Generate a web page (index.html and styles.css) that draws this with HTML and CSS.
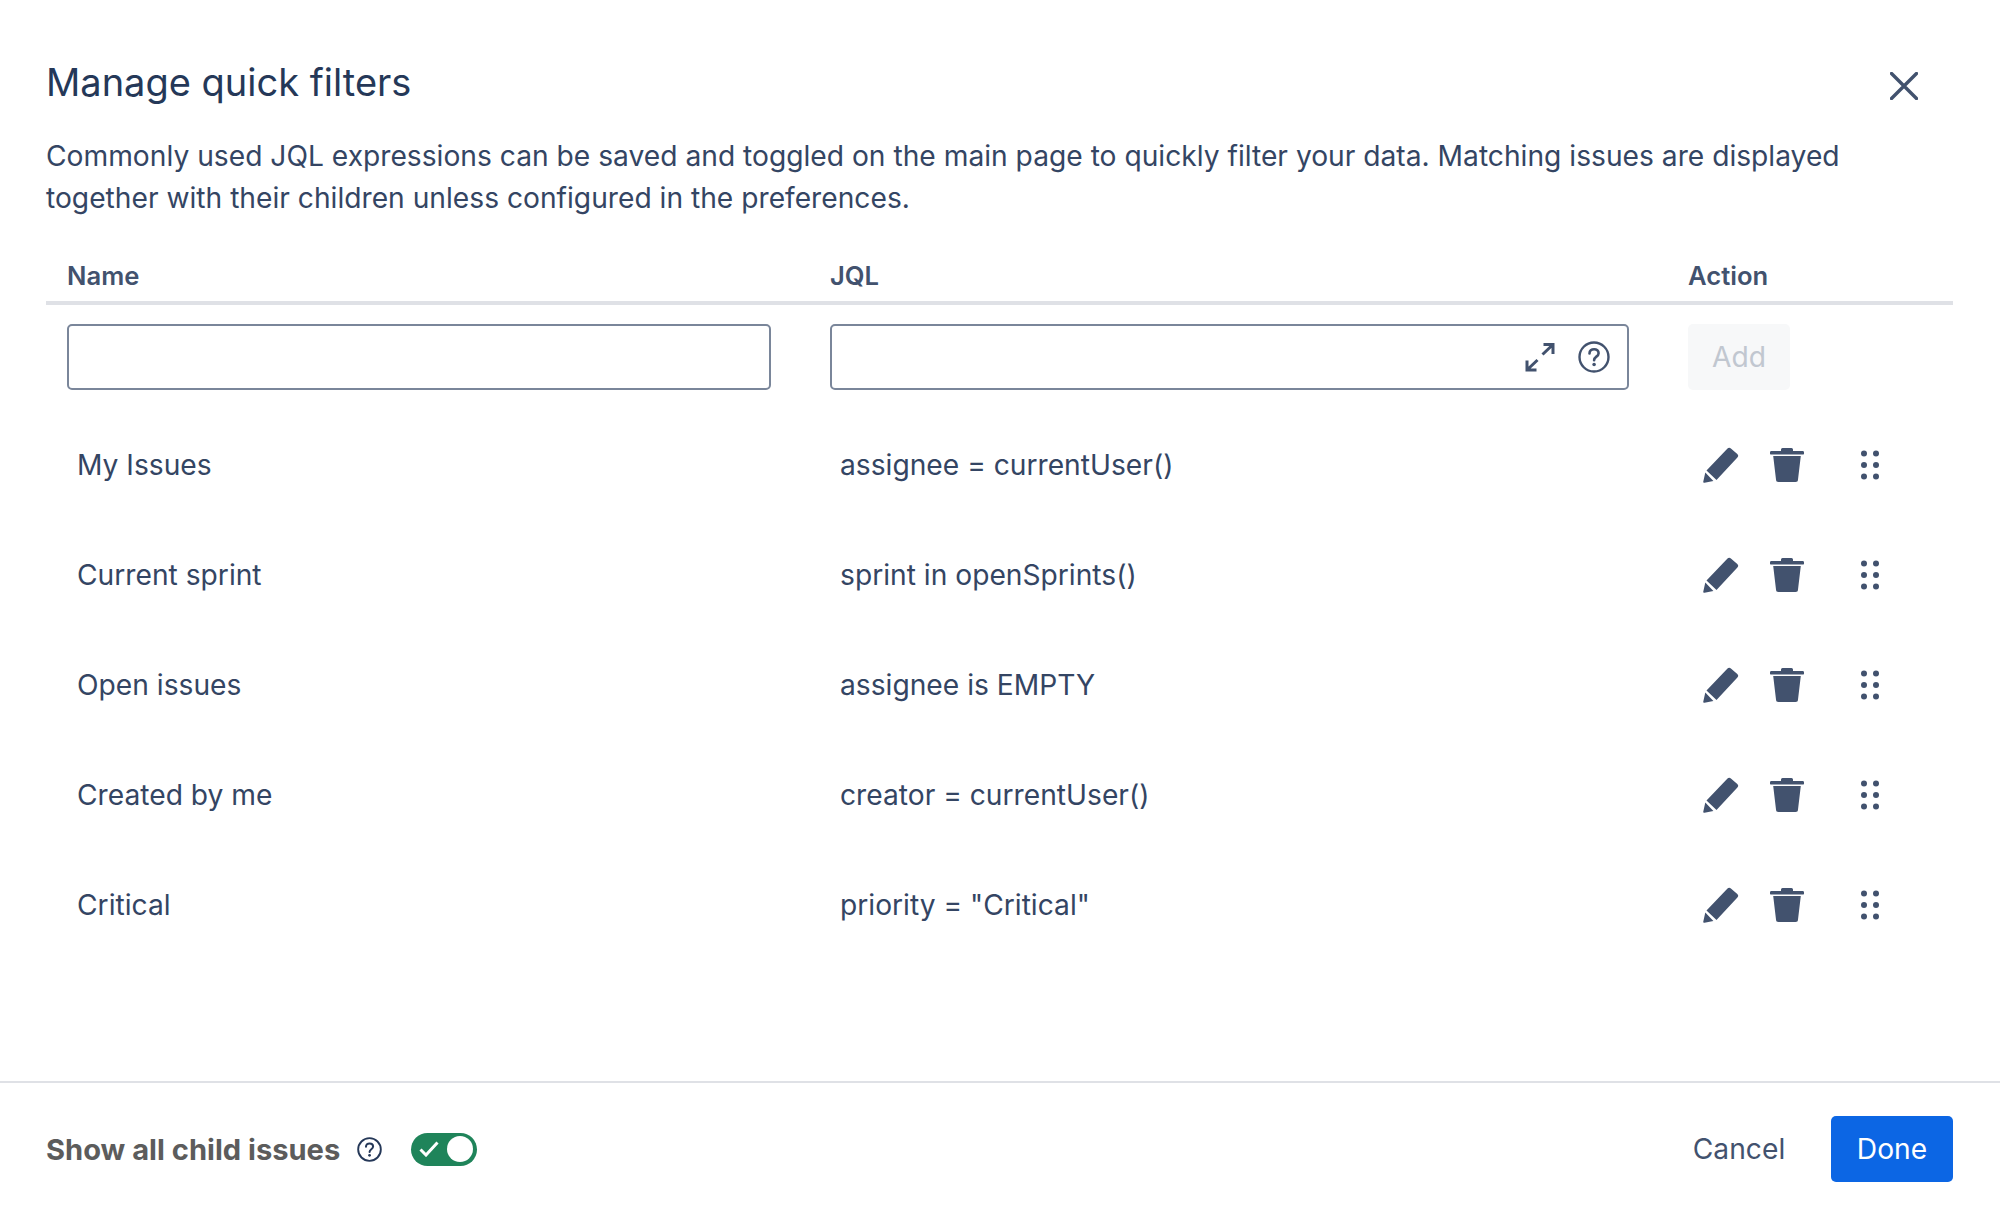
FILE: index.html
```html
<!DOCTYPE html>
<html lang="en">
<head>
    <meta charset="UTF-8">
    <title>Manage quick filters</title>
    <link rel="stylesheet" href="styles.css">
</head>
<body>
    <svg class="defs" width="0" height="0">
        <symbol id="i-pencil" viewBox="0 0 36 36">
            <path d="M24.500 1.500a2.500 2.500 0 0 1 3.400 0l6.400 5.500a2.500 2.500 0 0 1 .1 3.500L13.500 33 3.500 23.500z"/>
            <path d="M2.300 25.500l8.100 8.500L1.500 35.800a1 1 0 0 1-1.200-1.200z"/>
        </symbol>
        <symbol id="i-trash" viewBox="0 0 34 34">
            <path d="M12.500 0h9a1.500 1.500 0 0 1 1.500 1.500V3h9.500a1.500 1.500 0 0 1 0 3.600h-31a1.500 1.500 0 0 1 0-3.600H11V1.500A1.500 1.500 0 0 1 12.500 0z"/>
            <path d="M3.200 8h27.600l-2.800 23.500a2.500 2.500 0 0 1-2.500 2.500H8.500A2.500 2.500 0 0 1 6 31.500z"/>
        </symbol>
        <symbol id="i-grip" viewBox="0 0 18 30">
            <circle cx="3" cy="3.500" r="3"/><circle cx="15" cy="3.500" r="3"/>
            <circle cx="3" cy="15" r="3"/><circle cx="15" cy="15" r="3"/>
            <circle cx="3" cy="26.500" r="3"/><circle cx="15" cy="26.500" r="3"/>
        </symbol>
        <symbol id="i-help" viewBox="0 0 32 32">
            <circle cx="16" cy="16" r="14.500" fill="none" stroke="currentColor" stroke-width="2.400"/>
            <path d="M11.500 12.500c0-2.700 2-4.300 4.600-4.300s4.500 1.600 4.500 4c0 3.400-4.500 3.500-4.500 7" fill="none" stroke="currentColor" stroke-width="2.600" stroke-linecap="round"/>
            <circle cx="16.100" cy="23.500" r="1.800" fill="currentColor"/>
        </symbol>
    </svg>

    <div class="modal">
        <header class="modal-head">
            <h1>Manage quick filters</h1>
            <button class="close" aria-label="Close">
                <svg width="28" height="28" viewBox="0 0 28 28"><path d="M1.500 1.500l25 25M26.500 1.500l-25 25" fill="none" stroke="currentColor" stroke-width="3.400" stroke-linecap="round"/></svg>
            </button>
        </header>

        <p class="intro">Commonly used JQL expressions can be saved and toggled on the main page to quickly filter your data. Matching issues are displayed together with their children unless configured in the preferences.</p>

        <div class="table">
            <div class="row head-row">
                <div>Name</div>
                <div>JQL</div>
                <div>Action</div>
            </div>

            <div class="row form-row">
                <div><input class="field" type="text"></div>
                <div class="jql-field">
                    <input type="text">
                    <svg class="expand" width="30" height="30" viewBox="0 0 30 30"><path d="M18.500 2.500h9.500V12M28 2.500L17.500 12.500M2 18.500V28h9.500M2 28l10.500-10" fill="none" stroke="currentColor" stroke-width="3"/></svg>
                    <svg class="help" width="32" height="32"><use href="#i-help"/></svg>
                </div>
                <div><button class="add" disabled>Add</button></div>
            </div>

            <div class="row item-row">
                <div>My Issues</div>
                <div>assignee = currentUser()</div>
                <div class="actions">
                    <svg class="pencil"><use href="#i-pencil"/></svg>
                    <svg class="trash"><use href="#i-trash"/></svg>
                    <svg class="grip"><use href="#i-grip"/></svg>
                </div>
            </div>
            <div class="row item-row">
                <div>Current sprint</div>
                <div>sprint in openSprints()</div>
                <div class="actions">
                    <svg class="pencil"><use href="#i-pencil"/></svg>
                    <svg class="trash"><use href="#i-trash"/></svg>
                    <svg class="grip"><use href="#i-grip"/></svg>
                </div>
            </div>
            <div class="row item-row">
                <div>Open issues</div>
                <div>assignee is EMPTY</div>
                <div class="actions">
                    <svg class="pencil"><use href="#i-pencil"/></svg>
                    <svg class="trash"><use href="#i-trash"/></svg>
                    <svg class="grip"><use href="#i-grip"/></svg>
                </div>
            </div>
            <div class="row item-row">
                <div>Created by me</div>
                <div>creator = currentUser()</div>
                <div class="actions">
                    <svg class="pencil"><use href="#i-pencil"/></svg>
                    <svg class="trash"><use href="#i-trash"/></svg>
                    <svg class="grip"><use href="#i-grip"/></svg>
                </div>
            </div>
            <div class="row item-row">
                <div>Critical</div>
                <div>priority = "Critical"</div>
                <div class="actions">
                    <svg class="pencil"><use href="#i-pencil"/></svg>
                    <svg class="trash"><use href="#i-trash"/></svg>
                    <svg class="grip"><use href="#i-grip"/></svg>
                </div>
            </div>
        </div>

        <footer class="modal-foot">
            <div class="foot-left">
                <span class="child-label">Show all child issues</span>
                <svg class="foot-help" width="25" height="25"><use href="#i-help"/></svg>
                <span class="toggle">
                    <svg width="20" height="16" viewBox="0 0 20 16"><path d="M1.500 8.500l5.500 5.500L18.500 1.500" fill="none" stroke="#fff" stroke-width="3"/></svg>
                    <span class="thumb"></span>
                </span>
            </div>
            <div class="foot-right">
                <button class="cancel">Cancel</button>
                <button class="done">Done</button>
            </div>
        </footer>
    </div>
</body>
</html>
```

FILE: styles.css
```css
* {
    box-sizing: border-box;
}

body {
    margin: 0;
    background: #fff;
    font-family: Inter, "Liberation Sans", sans-serif;
    font-size: 28.2px;
    color: #344563;
}

.defs {
    position: absolute;
}

button {
    font-family: inherit;
    font-size: 28.2px;
    border: 0;
    padding: 0;
    background: none;
}

.modal {
    height: 1227px;
    display: flex;
    flex-direction: column;
}

.modal-head {
    display: flex;
    justify-content: space-between;
    padding: 60px 82px 0 46px;
    height: 135px;
}

h1 {
    margin: 0;
    font-size: 38px;
    font-weight: 400;
    line-height: 44px;
    color: #253858;
}

.close {
    height: 28px;
    margin-top: 12px;
    color: #42526e;
}

.intro {
    margin: 0;
    padding: 0 150px 0 46px;
    line-height: 42px;
}

.table {
    margin: 39px 47px 0 46px;
    flex: 1;
}

.row {
    display: grid;
    grid-template-columns: 763px 858px 286px;
}

.row > div {
    padding-left: 21px;
}

.head-row {
    height: 47px;
    border-bottom: 4px solid #dfe1e6;
    font-size: 25.6px;
    font-weight: 600;
    line-height: 36px;
    color: #42526e;
}

.form-row {
    height: 105px;
    padding-top: 19px;
}

.field,
.jql-field {
    height: 66px;
    border: 2px solid #7a869a;
    border-radius: 5px;
    background: #fff;
}

.field {
    width: 704px;
    display: block;
}

.form-row .jql-field {
    display: flex;
    align-items: center;
    width: 799px;
    margin-left: 21px;
    padding: 0 17px 0 0;
    color: #42526e;
}

.jql-field input {
    flex: 1;
    border: 0;
    outline: 0;
    min-width: 0;
}

.expand {
    margin-right: 23px;
}

.add {
    width: 102px;
    height: 66px;
    border-radius: 5px;
    background: #f7f8f9;
    color: #c1c7d0;
}

.item-row {
    height: 110px;
    align-items: center;
}

.row.item-row > div {
    padding-left: 31px;
}

.row.item-row > .actions {
    display: flex;
    align-items: center;
    padding-left: 36px;
    fill: #42526e;
}

.pencil {
    width: 36px;
    height: 36px;
}

.trash {
    width: 34px;
    height: 34px;
    margin-left: 31px;
}

.grip {
    width: 18px;
    height: 30px;
    margin-left: 57px;
}

.modal-foot {
    height: 146px;
    padding: 33px 47px 0 46px;
    border-top: 2px solid #dfe1e6;
    display: flex;
    justify-content: space-between;
}

.foot-left {
    height: 66px;
    display: flex;
    align-items: center;
}

.child-label {
    font-size: 29.1px;
    font-weight: 700;
    color: #5c5c5c;
}

.foot-help {
    margin-left: 17px;
    color: #253858;
}

.toggle {
    width: 66px;
    height: 33px;
    margin-left: 29px;
    padding: 0 4px 0 8px;
    border-radius: 17px;
    background: #1f845a;
    display: flex;
    align-items: center;
    justify-content: space-between;
}

.thumb {
    width: 26px;
    height: 26px;
    border-radius: 50%;
    background: #fff;
}

.foot-right {
    display: flex;
    gap: 20px;
}

.cancel {
    width: 144px;
    height: 66px;
    color: #42526e;
}

.done {
    width: 122px;
    height: 66px;
    border-radius: 5px;
    background: #0c66e4;
    color: #fff;
}
```
